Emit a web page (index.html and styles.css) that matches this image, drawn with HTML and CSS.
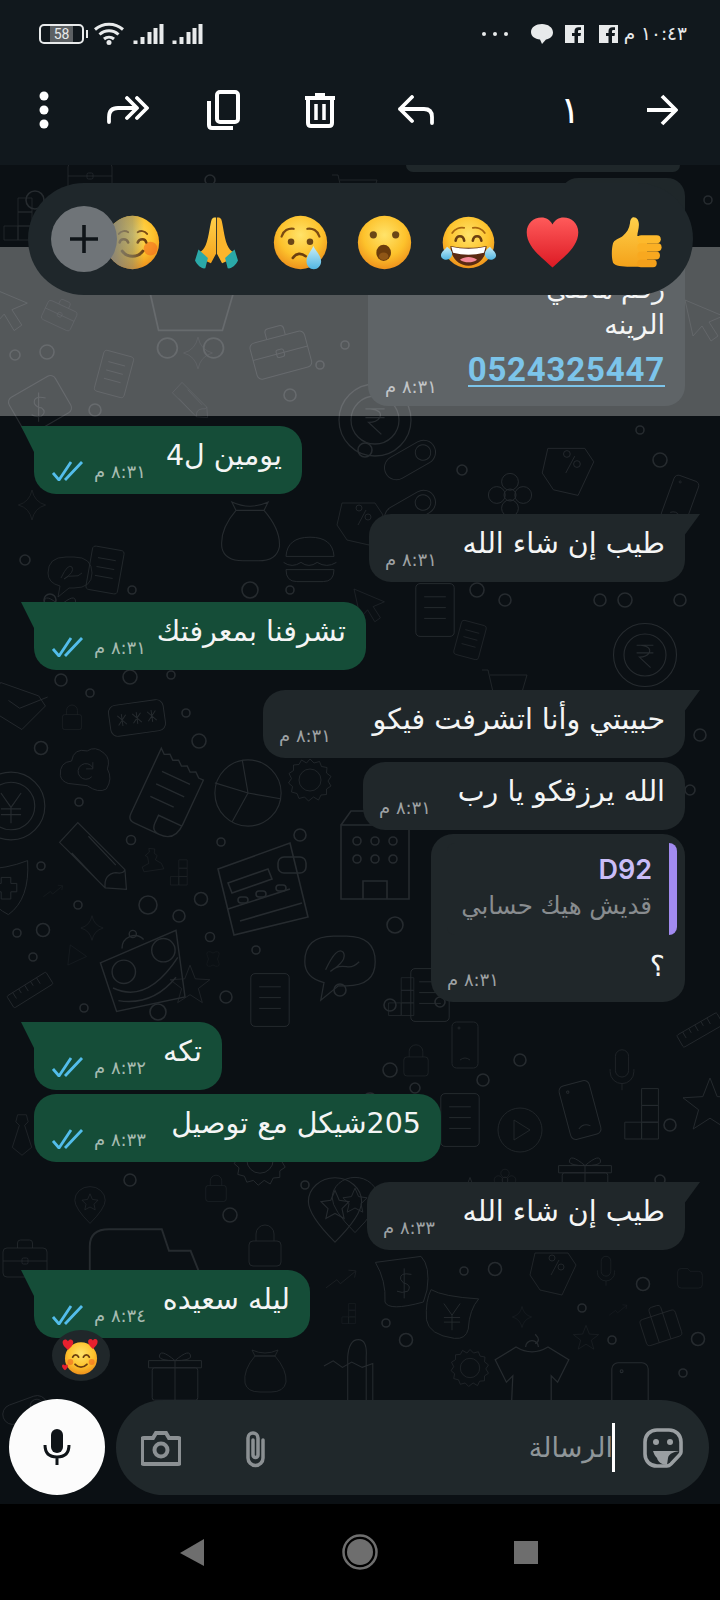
FILE: index.html
```html
<!DOCTYPE html>
<html lang="ar">
<head>
<meta charset="utf-8">
<title>WhatsApp</title>
<link rel="stylesheet" href="styles.css">
</head>
<body>
<svg class="defs" width="0" height="0" aria-hidden="true">
  <defs>
    <radialGradient id="face" cx="50%" cy="36%" r="64%"><stop offset="0" stop-color="#ffe36a"/><stop offset=".62" stop-color="#fdc22c"/><stop offset="1" stop-color="#ee921c"/></radialGradient>
    <linearGradient id="heartG" x1="0" y1="0" x2="0" y2="1"><stop offset="0" stop-color="#ff5a5a"/><stop offset="1" stop-color="#dc1a24"/></linearGradient>
    <linearGradient id="handG" x1="0" y1="0" x2="0" y2="1"><stop offset="0" stop-color="#ffd04a"/><stop offset="1" stop-color="#f4a21a"/></linearGradient>
    <linearGradient id="fade" x1="0" y1="0" x2="1" y2="0"><stop offset="0" stop-color="#7d8083"/><stop offset=".5" stop-color="#8a8a70" stop-opacity=".55"/><stop offset=".72" stop-color="#8a8a70" stop-opacity="0"/></linearGradient>
    <linearGradient id="tearG" x1="0" y1="0" x2="0" y2="1"><stop offset="0" stop-color="#c9eef8"/><stop offset="1" stop-color="#52b6e2"/></linearGradient>

    <symbol id="e-thumb" viewBox="-2 -1 68 68">
      <path d="M27 2c5-1 8 3 8 9 0 5-2 10-2 14h12v38H24C15 63 5 62 3 58c-2-6-2-17 0-24 1-4 8-6 12-9 5-4 8-9 9-16 0-3 1-6 3-7z" fill="url(#handG)"/>
      <rect x="33" y="24" width="29" height="10" rx="5" fill="#fdb92c"/>
      <rect x="33" y="34" width="30" height="10" rx="5" fill="#fbb024"/>
      <rect x="33" y="44" width="28" height="10" rx="5" fill="#f8a81f"/>
      <rect x="33" y="54" width="24" height="9.500" rx="4.500" fill="#f4a01a"/>
    </symbol>
    <symbol id="e-heart" viewBox="0 0 64 64">
      <path d="M32 61C19 49 2 37 2 20 2 10 10 3 19 3c6 0 10 3 13 8 3-5 7-8 13-8 9 0 17 7 17 17 0 17-17 29-30 41z" fill="url(#heartG)"/>
    </symbol>
    <symbol id="e-joy" viewBox="0 0 64 64">
      <circle cx="32" cy="32" r="30" fill="url(#face)"/>
      <path d="M13 21c3-5 9-7 14-6M51 21c-3-5-9-7-14-6" stroke="#a8660f" stroke-width="2" fill="none" stroke-linecap="round"/>
      <path d="M17 30c1-7 9-7 10 0M37 30c1-7 9-7 10 0" stroke="#6b3f10" stroke-width="3" fill="none" stroke-linecap="round"/>
      <path d="M11 36c13 3 29 3 42 0 0 13-9 23-21 23S11 49 11 36z" fill="#5a2a12"/>
      <path d="M12 37c13 3 27 3 40 0l-2 7c-12 3-24 3-36 0z" fill="#fff"/>
      <path d="M22 52c6-4 14-4 20 0-6 4-14 4-20 0z" fill="#f58a9a"/>
      <path d="M7 37c-2 3-7 6-7 10 0 3 3 5 6 5 4 0 7-3 7-7 0-3-3-6-6-8zM57 37c2 3 7 6 7 10 0 3-3 5-6 5-4 0-7-3-7-7 0-3 3-6 6-8z" fill="url(#tearG)"/>
    </symbol>
    <symbol id="e-wow" viewBox="0 0 64 64">
      <circle cx="32" cy="32" r="31" fill="url(#face)"/>
      <circle cx="19" cy="23" r="4.200" fill="#6b4616"/><circle cx="45" cy="23" r="4.200" fill="#6b4616"/>
      <ellipse cx="31" cy="44" rx="8.500" ry="9.500" fill="#6b3c0c"/>
      <ellipse cx="31" cy="48" rx="5.500" ry="4.500" fill="#8f5616"/>
    </symbol>
    <symbol id="e-sad" viewBox="0 0 64 64">
      <circle cx="32" cy="32" r="31" fill="url(#face)"/>
      <path d="M10 25c2-7 8-10 14-9M54 25c-2-7-8-10-14-9" stroke="#7a4a12" stroke-width="2.600" fill="none" stroke-linecap="round"/>
      <circle cx="21" cy="31" r="3.800" fill="#6b4616"/><circle cx="43" cy="31" r="3.800" fill="#6b4616"/>
      <path d="M23 50c4-6 10-6 15-2" stroke="#6b3f10" stroke-width="3" fill="none" stroke-linecap="round"/>
      <path d="M47 36c-2 5-8 11-8 18 0 5 4 9 8.500 9s8.500-4 8.500-9c0-7-7-13-9-18z" fill="url(#tearG)"/>
    </symbol>
    <symbol id="e-pray" viewBox="0 0 64 64">
      <path d="M30 3h1.500v42l-6 11-9-4-4-9c3-1 5-4 7-8 4-10 5-25 7-30 .8-1.500 2-2 3.500-2z" fill="url(#handG)"/>
      <path d="M34 3h-1.500v42l6 11 9-4 4-9c-3-1-5-4-7-8-4-10-5-25-7-30-.8-1.500-2-2-3.500-2z" fill="#fbb52c"/>
      <path d="M11 40l11 10-3 12c-4 1-9-3-12-9zM53 40 42 50l3 12c4 1 9-3 12-9z" fill="#2aa9a8"/>
    </symbol>
    <symbol id="e-smile" viewBox="0 0 64 64">
      <circle cx="32" cy="32" r="31" fill="url(#face)"/>
      <circle cx="53" cy="39" r="8" fill="#f0651f" opacity=".55"/>
      <path d="M16 22c3-4 8-4 11-2M38 20c3-2 8-2 11 2" stroke="#7a4a12" stroke-width="2.200" fill="none" stroke-linecap="round"/>
      <path d="M17 32c1-5 8-5 10 0M38 32c2-5 9-5 10 0" stroke="#6b3f10" stroke-width="3" fill="none" stroke-linecap="round"/>
      <path d="M20 42c6 8 18 8 24 0" stroke="#6b3f10" stroke-width="3.500" fill="none" stroke-linecap="round"/>
      <circle cx="32" cy="32" r="31" fill="url(#fade)"/>
    </symbol>
    <symbol id="e-love" viewBox="0 0 64 64">
      <circle cx="32" cy="36" r="27" fill="url(#face)"/>
      <path d="M18 34c2-5 8-5 10 0M36 34c2-5 8-5 10 0" stroke="#6b3f10" stroke-width="3" fill="none" stroke-linecap="round"/>
      <path d="M22 46c6 6 14 6 20 0" stroke="#6b3f10" stroke-width="3" fill="none" stroke-linecap="round"/>
      <circle cx="14" cy="42" r="5" fill="#f0651f" opacity=".6"/><circle cx="50" cy="42" r="5" fill="#f0651f" opacity=".6"/>
      <path d="M10 22C4 17 1 13 1 9c0-5 6-7 9-2 3-5 9-3 9 2 0 4-3 8-9 13z" fill="#e7202e"/>
      <path d="M52 20c-5-4-8-8-8-12 0-5 5-6 8-2 3-4 8-3 8 2 0 4-3 8-8 12z" fill="#e7202e"/>
      <path d="M5 56c-3-2-5-5-5-7 0-3 3-4 5-1 2-3 5-2 5 1 0 2-2 5-5 7z" fill="#e7202e"/>
    </symbol>

    <symbol id="d-case" viewBox="-50 -50 100 100" overflow="visible"><rect x="-44" y="-24" width="88" height="58" rx="8"/><path d="M-15-24v-10q0-6 6-6h18q6 0 6 6v10M-44 2H44"/><rect x="-6" y="-4" width="12" height="12" rx="3"/></symbol>
    <symbol id="d-suit" viewBox="-50 -50 100 100" overflow="visible"><rect x="-42" y="-22" width="84" height="62" rx="8"/><path d="M-14-22v-12q0-8 8-8h12q8 0 8 8v12M-14-22V40M14-22V40"/></symbol>
    <symbol id="d-star4" viewBox="-50 -50 100 100" overflow="visible"><path d="M0-44Q7-9 40 0 7 9 0 44-7 9-40 0-7-9 0-44z"/></symbol>
    <symbol id="d-star5" viewBox="-50 -50 100 100" overflow="visible"><path d="M0-45 12-14 45-12 19 8 28 40 0 22-28 40-19 8-45-12-12-14z"/></symbol>
    <symbol id="d-doc" viewBox="-50 -50 100 100" overflow="visible"><rect x="-32" y="-44" width="64" height="88" rx="7"/><path d="M-18-22H18M-18-4H18M-18 14H18"/></symbol>
    <symbol id="d-receipt" viewBox="-50 -50 100 100" overflow="visible"><path d="M-30-46l6 5 6-3 6 5 6-3 6 5 6-3 6 5 6-3 6 5 6 0V24Q30 46 10 46H-22Q-30 46-30 38zM10 46Q0 46 0 36V26H30"/><path d="M-18-22H18M-18-6H18M-18 10H12"/></symbol>
    <symbol id="d-gear" viewBox="-50 -50 100 100" overflow="visible"><circle r="22"/><path d="M0-42 8-34 19-37 23-27 34-25 33-14 42-7 36 2 42 12 33 18 33 29 22 30 17 40 7 34-3 42-11 34-22 37-26 27-37 24-35 13-43 6-37-3-42-13-33-19-33-30-22-31-17-40-7-34z"/></symbol>
    <symbol id="d-coin" viewBox="-50 -50 100 100" overflow="visible"><circle r="45"/><circle r="30"/><path d="M-12-14H12M-12-3H12M-6-14Q10-12 6-3 2 3-8 3L8 18"/></symbol>
    <symbol id="d-yen" viewBox="-50 -50 100 100" overflow="visible"><circle r="47"/><circle r="33"/><path d="M-14-18 0 2 14-18M-14 4H14M-14 12H14M0 2V24"/></symbol>
    <symbol id="d-lock" viewBox="-50 -50 100 100" overflow="visible"><rect x="-32" y="-8" width="64" height="50" rx="8"/><path d="M-18-8v-14a18 18 0 0 1 36 0v14"/></symbol>
    <symbol id="d-phone" viewBox="-50 -50 100 100" overflow="visible"><rect x="-26" y="-46" width="52" height="92" rx="9"/><path d="M-10 30q10-8 20 0"/><circle cx="-12" cy="-34" r="2"/></symbol>
    <symbol id="d-mic" viewBox="-50 -50 100 100" overflow="visible"><rect x="-15" y="-46" width="30" height="62" rx="15"/><path d="M-27-2v6a27 27 0 0 0 54 0v-6M0 31v15"/></symbol>
    <symbol id="d-play" viewBox="-50 -50 100 100" overflow="visible"><circle r="44"/><path d="M-12-20 20 0-12 20z"/></symbol>
    <symbol id="d-moneybag" viewBox="-50 -50 100 100" overflow="visible"><path d="M-46-36 30-46Q46-30 40 10L34 30Q-24 46-30 30-28-6-46-36z"/><path d="M14-16Q-6-20-4-8 0 0 6 0 14 4 8 12-2 16-10 12M2-26V24"/></symbol>
    <symbol id="d-yenbag" viewBox="-50 -50 100 100" overflow="visible"><path d="M-36-42Q-16-30 46-26 30-8 28 26 24 44 4 42-40 36-44 10-46-24-36-42z"/><path d="M-14-18 0 2 14-18M-14 6H14M-14 14H14M0 2V28"/></symbol>
    <symbol id="d-bag" viewBox="-50 -50 100 100" overflow="visible"><path d="M-20-28Q-44 0-40 26-36 44-10 44H12Q38 44 42 24 44 0 20-28zM-26-40Q0-28 26-40L20-28H-20z"/></symbol>
    <symbol id="d-blocks" viewBox="-50 -50 100 100" overflow="visible"><path d="M-14-44H14V-16H-14zM-14-16H14V12H-14zM-14 12H14V40H-14zM-42 12H-14V40H-42z"/></symbol>
    <symbol id="d-toggle" viewBox="-50 -50 100 100" overflow="visible"><rect x="-46" y="-20" width="92" height="40" rx="20"/><circle cx="25" r="13"/></symbol>
    <symbol id="d-pass" viewBox="-50 -50 100 100" overflow="visible"><rect x="-46" y="-26" width="92" height="52" rx="12"/><path d="M-32-8-18 8M-18-8-32 8M-25-10V10M-7-8 7 8M7-8-7 8M0-10V10M18-8 32 8M32-8 18 8M25-10V10"/></symbol>
    <symbol id="d-calc" viewBox="-50 -50 100 100" overflow="visible"><path d="M-44-18 28-44 46 30-28 48zM-34-4 6-18 10-8-30 6zM-34 22l62-20M-22 34 40 16"/><rect x="-24" y="10" width="10" height="6" rx="3"/><rect x="-6" y="4" width="10" height="6" rx="3"/><rect x="14" y="-2" width="10" height="6" rx="3"/><rect x="16" y="-30" width="28" height="16" rx="6"/></symbol>
    <symbol id="d-pie" viewBox="-50 -50 100 100" overflow="visible"><circle r="46"/><path d="M0 0-8-46M0 0-46-14M0 0 45 8M0 0-22 40"/></symbol>
    <symbol id="d-shop" viewBox="-50 -50 100 100" overflow="visible"><path d="M-34 44V-30H34V44zM-34-30-24-44H24L34-30M-12 44V26H12V44"/><circle cx="-18" cy="-14" r="4"/><circle cx="0" cy="-14" r="4"/><circle cx="18" cy="-14" r="4"/><circle cx="-18" cy="4" r="4"/><circle cx="0" cy="4" r="4"/><circle cx="18" cy="4" r="4"/></symbol>
    <symbol id="d-cart" viewBox="-50 -50 100 100" overflow="visible"><path d="M-46-30H-34L-24 14H34L44-20H-30"/><circle cx="-16" cy="30" r="9"/><circle cx="26" cy="30" r="9"/></symbol>
    <symbol id="d-burger" viewBox="-50 -50 100 100" overflow="visible"><path d="M-40-6Q-38-38 0-38 38-38 40-6zM-44 4Q-30 14-15 4-2 14 12 4 28 14 44 4M-40 16H40Q40 36 22 36H-22Q-40 36-40 16z"/></symbol>
    <symbol id="d-chat" viewBox="-50 -50 100 100" overflow="visible"><path d="M-44-4Q-44-36-8-36H8Q44-36 44-4 44 26 8 26H-2L-24 44-20 22Q-44 16-44-4z"/><path d="M-18 6Q-4-24 4-16 10-6-12 8-4 0 8 2 16 4 24-4"/></symbol>
    <symbol id="d-cloud" viewBox="-50 -50 100 100" overflow="visible"><path d="M-44 10Q-46-14-24-16-20-40 4-34 18-44 34-30 46-20 40-2 50 16 38 34 24 42 4 28L-30 24Q-42 20-44 10z"/><path d="M14-4A14 14 0 1 0 12 12M14-14V-2H2"/></symbol>
    <symbol id="d-mail" viewBox="-50 -50 100 100" overflow="visible"><path d="M-40-42 28-18 40 0-2 42-44 16-46-30zM-26-10-6 4 44-16"/></symbol>
    <symbol id="d-shield" viewBox="-50 -50 100 100" overflow="visible"><path d="M-36-30Q0-30 36-44 40 20 4 46-40 24-36-30z"/><path d="M-8-16H8V-6H18V8H8V20H-8V8H-18V-6H-8z"/></symbol>
    <symbol id="d-trend" viewBox="-50 -50 100 100" overflow="visible"><path d="M-44 26-12 2-2 14 42-22M22-26 44-24 40-4"/></symbol>
    <symbol id="d-chess" viewBox="-50 -50 100 100" overflow="visible"><path d="M-30 36-36 20-14 8-18-14-26-18-12-30-14-42 6-40 4-26 14-18 8-4 28 8 36 26z"/></symbol>
    <symbol id="d-tri" viewBox="-50 -50 100 100" overflow="visible"><path d="M-24-42 44 6-34 42z"/></symbol>
    <symbol id="d-robot" viewBox="-50 -50 100 100" overflow="visible"><path d="M-44-8 40-44 50 30-26 46z"/><circle cx="-18" cy="2" r="13"/><circle cx="26" cy="-22" r="13"/><path d="M-30 20Q8 38 42-14M-24 34Q14 40 40 8"/><circle cx="-8" cy="-40" r="4"/><path d="M-20-24a14 14 0 0 1 24-10"/></symbol>
    <symbol id="d-cross" viewBox="-50 -50 100 100" overflow="visible"><path d="M-14-40Q0-26 14-40 44-44 30-14 20 0 30 14 44 44 14 40 0 26-14 40-44 44-30 14-20 0-30-14-44-44-14-40z"/></symbol>
    <symbol id="d-ruler" viewBox="-50 -50 100 100" overflow="visible"><rect x="-46" y="-14" width="92" height="28" rx="3"/><path d="M-32-14V0M-18-14V-4M-4-14V0M10-14V-4M24-14V0"/></symbol>
    <symbol id="d-tag" viewBox="-50 -50 100 100" overflow="visible"><path d="M-36-44H30L46-20 18 40-26 30-46 0z"/><path d="M12-30-4 0"/><circle cx="-2" cy="-34" r="6"/><circle cx="16" cy="-16" r="6"/></symbol>
    <symbol id="d-folder" viewBox="-50 -50 100 100" overflow="visible"><path d="M-44-22Q-44-34-30-34H-8L0-24H30Q44-24 44-10V24Q44 36 30 36H-30Q-44 36-44 24z"/></symbol>
    <symbol id="d-tshirt" viewBox="-50 -50 100 100" overflow="visible"><path d="M-20-30-46-14-32 14-24 6-26 50H24L24 6 32 14 46-14 20-30Q0-18-20-30zM-8-30A8 8 0 0 1 8-30M4-46Q12-38 4-34"/></symbol>
    <symbol id="d-bread" viewBox="-50 -50 100 100" overflow="visible"><path d="M-8 46V-20Q-6-46 8-46 22-46 20-20V46M-44-6-30-14-16-4-2-12 14-4 30-10V46"/></symbol>
    <symbol id="d-van" viewBox="-50 -50 100 100" overflow="visible"><path d="M-46 22V-20Q-46-34-30-34H14L20-16H38L46 4V22H30M-10 22H12M-46 22H-30"/><circle cx="-20" cy="24" r="10"/><circle cx="22" cy="24" r="10"/></symbol>
    <symbol id="d-gift" viewBox="-50 -50 100 100" overflow="visible"><rect x="-38" y="-12" width="76" height="54" rx="4"/><path d="M-44-24H44V-12H-44zM0-24V42M0-24Q-26-46-26-30-24-24 0-24 26-46 26-30 24-24 0-24"/></symbol>
    <symbol id="d-cash" viewBox="-50 -50 100 100" overflow="visible"><rect x="-38" y="-30" width="76" height="60" rx="8" transform="rotate(-30)"/><path d="M8-10Q-10-14-8-2-4 4 2 4 10 10 2 16-6 18-12 14M-2-18V24"/></symbol>
    <symbol id="d-flower" viewBox="-50 -50 100 100" overflow="visible"><circle r="10"/><circle cy="-22" r="14"/><circle cy="22" r="14"/><circle cx="-22" r="14"/><circle cx="22" r="14"/></symbol>
    <symbol id="d-tie" viewBox="-50 -50 100 100" overflow="visible"><path d="M-10-46H10L14-30 6-22 22 28 0 46-22 28-6-22-14-30z"/></symbol>
    <symbol id="d-pin" viewBox="-50 -50 100 100" overflow="visible"><path d="M0 46Q-38 8-38-12A38 34 0 0 1 38-12Q38 8 0 46z"/><path d="M0-28 6-14 20-12 10-2 13 12 0 5-13 12-10-2-20-12-6-14z"/></symbol>
    <symbol id="d-cursor" viewBox="-50 -50 100 100" overflow="visible"><path d="M-40-40 36-8 8 4 26 32 12 42-6 12-24 32z"/></symbol>
    <symbol id="d-pencil" viewBox="-50 -50 100 100" overflow="visible"><path d="M-44-18-20-44 42 18 44 44 16 42zM-28-4 8 34M-6-26 30 12M16 42Q14 24 30 22 40 24 42 18"/></symbol>
  </defs>
</svg>

<main class="screen">
  <header class="topbar">
    <div class="status">
      <div class="status-left">
        <div class="battery"><span class="battery-num">58</span></div>
        <svg class="ic-wifi" viewBox="0 0 30 24"><path d="M1 7.500C9 .5 21 .5 29 7.500M5.500 12.500C11 7.500 19 7.500 24.500 12.500M10 17C13 14.500 17 14.500 20 17" fill="none" stroke="#e8eaeb" stroke-width="3"/><circle cx="15" cy="20.500" r="2.500" fill="#e8eaeb"/></svg>
        <svg class="ic-signal" viewBox="0 0 30 20"><path d="M0 16.500h4V20H0zM7 13h4v7H7zM14 8h4v12h-4zM20 4h4v16h-4zM26 0h4v20h-4z" fill="#e8eaeb"/></svg>
        <svg class="ic-signal" viewBox="0 0 30 20"><path d="M0 16.500h4V20H0zM7 13h4v7H7zM14 8h4v12h-4zM20 4h4v16h-4zM26 0h4v20h-4z" fill="#e8eaeb"/></svg>
      </div>
      <div class="status-right">
        <svg class="ic-dots" viewBox="0 0 26 4"><circle cx="2" cy="2" r="2" fill="#e8eaeb"/><circle cx="13" cy="2" r="2" fill="#e8eaeb"/><circle cx="24" cy="2" r="2" fill="#e8eaeb"/></svg>
        <svg class="ic-msg" viewBox="0 0 22 20"><path d="M11 0c6 0 11 3.500 11 8.500 0 4.500-4 6.500-7 7L11 20l-2-4.500C4 15 0 12.500 0 8c0-5 5-8 11-8z" fill="#e8eaeb"/></svg>
        <svg class="ic-fb" viewBox="0 0 19 18"><path fill="#e8eaeb" fill-rule="evenodd" d="M0 0h19v18H0zM13 18v-7h2.500l.5-3h-3V6.500c0-1 .3-1.500 1.500-1.500H16V2.300h-2.500C11 2.300 9.500 3.800 9.500 6.300V8H7v3h2.500v7z"/></svg>
        <svg class="ic-fb" viewBox="0 0 19 18"><path fill="#e8eaeb" fill-rule="evenodd" d="M0 0h19v18H0zM13 18v-7h2.500l.5-3h-3V6.500c0-1 .3-1.500 1.500-1.500H16V2.300h-2.500C11 2.300 9.500 3.800 9.500 6.300V8H7v3h2.500v7z"/></svg>
        <span class="clock">١٠:٤٣ م</span>
      </div>
    </div>
    <div class="actions">
      <svg class="a-more" viewBox="0 0 10 38"><circle cx="5" cy="5" r="4.500" fill="#fff"/><circle cx="5" cy="19" r="4.500" fill="#fff"/><circle cx="5" cy="33" r="4.500" fill="#fff"/></svg>
      <svg class="a-forward" viewBox="0 0 42 28"><path d="M2 26v-5q0-9 9-9h15M20 2l10 10-10 10M30 2l10 10-10 10" fill="none" stroke="#fff" stroke-width="3.800" stroke-linecap="round" stroke-linejoin="round"/></svg>
      <svg class="a-copy" viewBox="0 0 34 40"><rect x="11" y="2" width="21" height="30" rx="3" fill="none" stroke="#fff" stroke-width="4"/><path d="M3 11v24q0 3 3 3h21" fill="none" stroke="#fff" stroke-width="4"/></svg>
      <svg class="a-delete" viewBox="0 0 32 36"><path d="M1 6h30" stroke="#fff" stroke-width="4"/><path d="M11 3h10" stroke="#fff" stroke-width="4"/><path d="M4 7v24q0 3 3 3h18q3 0 3-3V7" fill="none" stroke="#fff" stroke-width="4"/><path d="M12 12v16M20 12v16" stroke="#fff" stroke-width="3.500"/></svg>
      <svg class="a-reply" viewBox="0 0 36 30"><path d="M14 2 2 14l12 12M2 14h24q8 0 8 8v6" fill="none" stroke="#fff" stroke-width="3.800" stroke-linecap="round" stroke-linejoin="round"/></svg>
      <span class="count">١</span>
      <svg class="a-back" viewBox="0 0 32 32"><path d="M1 16h29M16 2l14 14-14 14" fill="none" stroke="#fff" stroke-width="3.800" stroke-linejoin="round"/></svg>
    </div>
  </header>

  <section class="chat">
    <svg class="wall" viewBox="0 165 720 1339" aria-hidden="true">
      <g class="doodles">
        <use href="#d-blocks" x="0" y="195" width="50" height="50"/>
        <use href="#d-case" x="60" y="150" width="60" height="50"/>
        <use href="#d-cart" x="330" y="165" width="50" height="50"/>
        <use href="#d-cursor" x="-20" y="280" width="55" height="55"/>
        <use href="#d-case" x="40" y="296" width="40" height="36" transform="rotate(25 60 314)"/>
        <use href="#d-cart" x="110" y="260" width="150" height="110"/>
        <use href="#d-case" x="240" y="320" width="80" height="64" transform="rotate(-15 280 352)"/>
        <use href="#d-doc" x="90" y="350" width="48" height="48" transform="rotate(15 114 374)"/>
        <use href="#d-star4" x="180" y="335" width="36" height="36"/>
        <use href="#d-cash" x="5" y="370" width="70" height="70"/>
        <use href="#d-pencil" x="170" y="380" width="40" height="40"/>
        <use href="#d-coin" x="335" y="380" width="80" height="80"/>
        <use href="#d-cursor" x="680" y="290" width="50" height="60"/>
        <use href="#d-star4" x="15" y="488" width="34" height="34"/>
        <use href="#d-smile" x="62" y="505" width="50" height="60"/>
        <use href="#d-chat" x="40" y="550" width="60" height="50"/>
        <use href="#d-doc" x="80" y="545" width="50" height="50" transform="rotate(10 105 570)"/>
        <use href="#d-gift" x="20" y="590" width="80" height="60"/>
        <use href="#d-burger" x="275" y="530" width="70" height="60"/>
        <use href="#d-bag" x="215" y="490" width="70" height="80"/>
        <use href="#d-toggle" x="375" y="430" width="70" height="60" transform="rotate(-30 410 460)"/>
        <use href="#d-toggle" x="375" y="480" width="70" height="60" transform="rotate(-30 410 510)"/>
        <use href="#d-flower" x="480" y="465" width="60" height="60"/>
        <use href="#d-tag" x="540" y="445" width="56" height="56"/>
        <use href="#d-phone" x="655" y="470" width="50" height="60" transform="rotate(20 680 500)"/>
        <use href="#d-tag" x="335" y="500" width="50" height="50"/>
        <use href="#d-cursor" x="350" y="580" width="40" height="50"/>
        <use href="#d-doc" x="450" y="615" width="40" height="50" transform="rotate(15 470 640)"/>
        <use href="#d-doc" x="400" y="580" width="70" height="60"/>
        <use href="#d-coin" x="610" y="620" width="70" height="70"/>
        <use href="#d-cart" x="470" y="660" width="70" height="50"/>

        <use href="#d-mail" x="-5" y="678" width="56" height="56"/>
        <use href="#d-lock" x="57" y="702" width="30" height="30"/>
        <use href="#d-pass" x="100" y="688" width="74" height="60" transform="rotate(-8 137 718)"/>
        <use href="#d-cloud" x="55" y="742" width="60" height="56"/>
        <use href="#d-receipt" x="125" y="740" width="86" height="110" transform="rotate(25 168 795)"/>
        <use href="#d-pie" x="212" y="757" width="72" height="72"/>
        <use href="#d-yen" x="-35" y="770" width="92" height="72"/>
        <use href="#d-pencil" x="55" y="818" width="76" height="76"/>
        <use href="#d-shield" x="-24" y="855" width="60" height="64"/>
        <use href="#d-trend" x="38" y="880" width="30" height="22"/>
        <use href="#d-chess" x="138" y="845" width="30" height="32"/>
        <use href="#d-blocks" x="168" y="855" width="30" height="36"/>
        <use href="#d-calc" x="212" y="832" width="100" height="110"/>
        <use href="#d-star4" x="78" y="912" width="28" height="32"/>
        <use href="#d-tri" x="64" y="942" width="24" height="26"/>
        <use href="#d-robot" x="90" y="925" width="100" height="90"/>
        <use href="#d-star5" x="168" y="960" width="44" height="50"/>
        <use href="#d-cross" x="204" y="950" width="18" height="18"/>
        <use href="#d-ruler" x="-15" y="965" width="90" height="50" transform="rotate(-32 30 990)"/>
        <use href="#d-gear" x="285" y="755" width="50" height="50"/>
        <use href="#d-shop" x="325" y="805" width="100" height="100"/>
        <use href="#d-chat" x="295" y="925" width="90" height="80"/>
        <use href="#d-doc" x="240" y="965" width="60" height="70"/>
        <use href="#d-blocks" x="385" y="975" width="45" height="45"/>
        <use href="#d-doc" x="400" y="960" width="60" height="70"/>
        <use href="#d-lock" x="397" y="1040" width="38" height="40"/>
        <use href="#d-ruler" x="660" y="1005" width="80" height="50" transform="rotate(-30 700 1030)"/>
        <use href="#d-smile" x="300" y="1050" width="80" height="80"/>
        <use href="#d-phone" x="440" y="1010" width="50" height="70"/>
        <use href="#d-phone" x="550" y="1065" width="60" height="90" transform="rotate(-15 580 1110)"/>
        <use href="#d-mic" x="600" y="1035" width="44" height="70"/>
        <use href="#d-play" x="495" y="1100" width="50" height="60"/>
        <use href="#d-blocks" x="620" y="1075" width="60" height="80"/>
        <use href="#d-star5" x="680" y="1075" width="60" height="60"/>
        <use href="#d-tie" x="0" y="1100" width="44" height="70"/>
        <use href="#d-doc" x="430" y="1085" width="60" height="70"/>
        <use href="#d-flower" x="490" y="1165" width="30" height="30"/>
        <use href="#d-gift" x="550" y="1150" width="70" height="60"/>
        <use href="#d-star5" x="445" y="1170" width="50" height="60"/>
        <use href="#d-pin" x="300" y="1170" width="70" height="80"/>
        <use href="#d-pin" x="325" y="1160" width="60" height="90"/>
        <use href="#d-lock" x="200" y="1170" width="32" height="36"/>
        <use href="#d-gear" x="230" y="1130" width="60" height="60"/>
        <use href="#d-pin" x="70" y="1180" width="40" height="50"/>
        <use href="#d-van" x="70" y="1210" width="150" height="120"/>
        <use href="#d-lock" x="240" y="1220" width="50" height="50"/>
        <use href="#d-case" x="0" y="1230" width="50" height="60"/>

        <use href="#d-trend" x="322" y="1262" width="38" height="34"/>
        <use href="#d-moneybag" x="362" y="1254" width="82" height="60"/>
        <use href="#d-yenbag" x="412" y="1285" width="80" height="58"/>
        <use href="#d-tag" x="520" y="1250" width="66" height="50"/>
        <use href="#d-mic" x="590" y="1250" width="32" height="42"/>
        <use href="#d-folder" x="676" y="1264" width="28" height="28"/>
        <use href="#d-blocks" x="340" y="1302" width="24" height="24"/>
        <use href="#d-star4" x="510" y="1305" width="24" height="24"/>
        <use href="#d-trend" x="605" y="1300" width="26" height="20"/>
        <use href="#d-star5" x="572" y="1324" width="28" height="28"/>
        <use href="#d-suit" x="636" y="1302" width="48" height="44" transform="rotate(-18 660 1325)"/>
        <use href="#d-tshirt" x="492" y="1326" width="80" height="90"/>
        <use href="#d-gear" x="448" y="1346" width="44" height="44"/>
        <use href="#d-bread" x="320" y="1330" width="66" height="80"/>
        <use href="#d-phone" x="595" y="1360" width="70" height="70"/>
        <use href="#d-gift" x="140" y="1345" width="70" height="60"/>
        <use href="#d-bag" x="240" y="1340" width="50" height="60"/>
        <use href="#d-toggle" x="0" y="1385" width="50" height="50" transform="rotate(-20 25 1410)"/>

        <circle cx="35" cy="200" r="9"/><circle cx="130" cy="190" r="5"/><circle cx="210" cy="180" r="5"/><circle cx="708" cy="200" r="4"/><circle cx="15" cy="355" r="5"/><circle cx="47" cy="352" r="7"/><circle cx="95" cy="410" r="6"/><circle cx="290" cy="395" r="6"/><circle cx="320" cy="365" r="4"/><circle cx="345" cy="345" r="4"/>
        <circle cx="365" cy="450" r="7"/><circle cx="462" cy="470" r="5"/><circle cx="660" cy="460" r="7"/><circle cx="640" cy="430" r="4"/><circle cx="50" cy="600" r="6"/><circle cx="25" cy="560" r="5"/><circle cx="132" cy="590" r="4"/><circle cx="250" cy="590" r="8"/><circle cx="290" cy="590" r="4"/><circle cx="477" cy="590" r="7"/><circle cx="505" cy="600" r="6"/><circle cx="600" cy="600" r="6"/><circle cx="625" cy="600" r="7"/><circle cx="680" cy="600" r="6"/>
        <circle cx="61" cy="680" r="6"/><circle cx="90" cy="693" r="4"/><circle cx="130" cy="677" r="7"/><circle cx="171" cy="675" r="4"/><circle cx="186" cy="713" r="4"/><circle cx="199" cy="741" r="7"/><circle cx="41" cy="748" r="6.500"/><circle cx="79" cy="802" r="4"/><circle cx="131" cy="840" r="4.500"/><circle cx="221" cy="842" r="4"/><circle cx="41" cy="866" r="4"/><circle cx="78" cy="905" r="4"/><circle cx="148" cy="905" r="9"/><circle cx="201" cy="899" r="6.500"/><circle cx="179" cy="916" r="6"/><circle cx="17" cy="933" r="4"/><circle cx="43" cy="930" r="6.500"/><circle cx="33" cy="957" r="4"/><circle cx="210" cy="937" r="4.500"/><circle cx="256" cy="950" r="4"/><circle cx="226" cy="997" r="6"/><circle cx="84" cy="1008" r="4"/><circle cx="158" cy="1012" r="8"/>
        <circle cx="300" cy="835" r="6"/><circle cx="690" cy="790" r="5"/><circle cx="700" cy="735" r="6"/><circle cx="340" cy="990" r="6"/><circle cx="390" cy="1005" r="6"/><circle cx="395" cy="925" r="8"/><circle cx="440" cy="1002" r="5"/>
        <circle cx="370" cy="1100" r="7"/><circle cx="390" cy="1070" r="7"/><circle cx="415" cy="1088" r="5"/><circle cx="483" cy="1080" r="6"/><circle cx="520" cy="1060" r="6"/><circle cx="670" cy="1125" r="6"/><circle cx="660" cy="1180" r="5"/><circle cx="500" cy="1220" r="5"/><circle cx="130" cy="1180" r="6"/><circle cx="230" cy="1215" r="7"/><circle cx="305" cy="1185" r="4"/>
        <circle cx="464" cy="1271" r="4"/><circle cx="495" cy="1269" r="6.500"/><circle cx="643" cy="1284" r="6.500"/><circle cx="582" cy="1308" r="4"/><circle cx="386" cy="1323" r="4"/><circle cx="406" cy="1340" r="6.500"/><circle cx="612" cy="1340" r="4"/><circle cx="698" cy="1339" r="6.500"/><circle cx="683" cy="1373" r="4"/>
      </g>
    </svg>

    <div class="messages">
      <div class="ghost-a"></div>
      <div class="ghost-b"></div>
      <div class="selected">
        <div class="sel-bubble">
          <p class="sel-line">رقم هاتفي</p>
          <p class="sel-line">الرينه</p>
          <div class="sel-foot">
            <a class="phone">0524325447</a>
            <span class="time">٨:٣١ م</span>
          </div>
        </div>
      </div>

      <div class="bubble out gap-first w268 tail">
        <span class="txt">يومين ل4</span>
        <span class="meta"><span class="time">٨:٣١ م</span><svg class="ticks" viewBox="0 0 32 20"><path d="M1 12l6 7L19 1M13 19 30 1" fill="none" stroke="#53bdeb" stroke-width="2.800"/></svg></span>
      </div>
      <div class="bubble in gap-lg w316 tail">
        <span class="txt">طيب إن شاء الله</span>
        <span class="meta"><span class="time">٨:٣١ م</span></span>
      </div>
      <div class="bubble out gap-lg w332 tail">
        <span class="txt">تشرفنا بمعرفتك</span>
        <span class="meta"><span class="time">٨:٣١ م</span><svg class="ticks" viewBox="0 0 32 20"><path d="M1 12l6 7L19 1M13 19 30 1" fill="none" stroke="#53bdeb" stroke-width="2.800"/></svg></span>
      </div>
      <div class="bubble in gap-lg w422 tail">
        <span class="txt">حبيبتي وأنا اتشرفت فيكو</span>
        <span class="meta"><span class="time">٨:٣١ م</span></span>
      </div>
      <div class="bubble in gap-sm w322">
        <span class="txt">الله يرزقكو يا رب</span>
        <span class="meta"><span class="time">٨:٣١ م</span></span>
      </div>
      <div class="bubble in gap-sm w254 quoted">
        <div class="quote">
          <div class="quote-name">D92</div>
          <div class="quote-text">قديش هيك حسابي</div>
        </div>
        <div class="quoted-foot">
          <span class="txt q-mark">؟</span>
          <span class="meta"><span class="time">٨:٣١ م</span></span>
        </div>
      </div>
      <div class="bubble out gap-lg w188 tail">
        <span class="txt">تكه</span>
        <span class="meta"><span class="time">٨:٣٢ م</span><svg class="ticks" viewBox="0 0 32 20"><path d="M1 12l6 7L19 1M13 19 30 1" fill="none" stroke="#53bdeb" stroke-width="2.800"/></svg></span>
      </div>
      <div class="bubble out gap-sm w407">
        <span class="txt">205شيكل مع توصيل</span>
        <span class="meta"><span class="time">٨:٣٣ م</span><svg class="ticks" viewBox="0 0 32 20"><path d="M1 12l6 7L19 1M13 19 30 1" fill="none" stroke="#53bdeb" stroke-width="2.800"/></svg></span>
      </div>
      <div class="bubble in gap-lg w318 tail">
        <span class="txt">طيب إن شاء الله</span>
        <span class="meta"><span class="time">٨:٣٣ م</span></span>
      </div>
      <div class="bubble out gap-lg w276 tail">
        <span class="txt">ليله سعيده</span>
        <span class="meta"><span class="time">٨:٣٤ م</span><svg class="ticks" viewBox="0 0 32 20"><path d="M1 12l6 7L19 1M13 19 30 1" fill="none" stroke="#53bdeb" stroke-width="2.800"/></svg></span>
        <div class="reaction-pill"><svg class="pill-emoji"><use href="#e-love"/></svg></div>
      </div>
    </div>

    <div class="reactions">
      <div class="plus"><svg class="plus-ic" viewBox="0 0 32 32"><path d="M16 2v28M2 16h28" stroke="#0f1418" stroke-width="3.600"/></svg></div>
      <div class="emoji-row">
        <svg class="emoji"><use href="#e-smile"/></svg>
        <svg class="emoji"><use href="#e-pray"/></svg>
        <svg class="emoji"><use href="#e-sad"/></svg>
        <svg class="emoji"><use href="#e-wow"/></svg>
        <svg class="emoji"><use href="#e-joy"/></svg>
        <svg class="emoji"><use href="#e-heart"/></svg>
        <svg class="emoji"><use href="#e-thumb"/></svg>
      </div>
    </div>

    <div class="composer">
      <div class="mic"><svg class="mic-ic" viewBox="0 0 28 38"><rect x="8" y="1" width="12" height="24" rx="6" fill="#0f1418"/><path d="M2 17q0 12 12 12t12-12M14 29v8" fill="none" stroke="#0f1418" stroke-width="3"/></svg></div>
      <div class="input">
        <svg class="ic-camera" viewBox="0 0 40 36"><path d="M3 8h9l3-5h10l3 5h9q2 0 2 2v22q0 2-2 2H3q-2 0-2-2V10q0-2 2-2z" fill="none" stroke="#8b9093" stroke-width="4"/><circle cx="20" cy="20" r="6.500" fill="none" stroke="#8b9093" stroke-width="4"/></svg>
        <svg class="ic-clip" viewBox="0 0 26 40"><path d="M20 12v18a7.500 7.500 0 0 1-15 0V10a5 5 0 0 1 10 0v17a2 2 0 0 1-5 0V12" fill="none" stroke="#8b9093" stroke-width="3.500" stroke-linecap="round"/></svg>
        <span class="placeholder">الرسالة</span>
        <span class="cursor"></span>
        <svg class="ic-sticker" viewBox="0 0 40 40"><path d="M14 2h12c7 0 12 5 12 12v10c0 1-.5 2-1.500 3L28 36c-1 1-2 2-4 2H14C7 38 2 33 2 26V14C2 7 7 2 14 2z" fill="none" stroke="#9a9fa2" stroke-width="3.600"/><circle cx="13" cy="14" r="3" fill="#9a9fa2"/><circle cx="27" cy="14" r="3" fill="#9a9fa2"/><path d="M10 23h26c-4 1-10 2-11 7l-1 7c-5 0-9-3-10-7-2-2-3-4-4-7z" fill="#9a9fa2"/></svg>
      </div>
    </div>
  </section>

  <nav class="navbar">
    <svg class="nav-back" viewBox="0 0 24 27"><path d="M24 0v27L0 14z" fill="#6e6e6e"/></svg>
    <svg class="nav-home" viewBox="0 0 36 36"><circle cx="18" cy="18" r="16.500" fill="none" stroke="#6e6e6e" stroke-width="2.500"/><circle cx="18" cy="18" r="13" fill="#6e6e6e"/></svg>
    <span class="nav-square"></span>
  </nav>
</main>
</body>
</html>
```
FILE: styles.css
```css
* { box-sizing: border-box; }
html, body { margin: 0; padding: 0; background: #000; }
body { font-family: "DejaVu Sans", "Noto Sans", sans-serif; }
.defs { position: absolute; width: 0; height: 0; }

.screen { width: 720px; height: 1600px; display: flex; flex-direction: column; overflow: hidden; }

/* top bar */
.topbar { height: 165px; background: #11181d; flex: none; display: flex; flex-direction: column; }
.status { height: 68px; display: flex; justify-content: space-between; align-items: center; padding: 0 33px 0 39px; }
.status-left, .status-right { display: flex; align-items: center; }
.battery { width: 45px; height: 20px; border: 2.500px solid #e8eaeb; border-radius: 5px; display: flex; align-items: center; justify-content: center; position: relative; margin-right: 10px; }
.battery::after { content: ""; position: absolute; right: -6px; top: 4px; width: 2px; height: 8px; background: #e8eaeb; }
.battery-num { font-family: "Roboto", sans-serif; font-size: 14px; color: #e8eaeb; line-height: 1; background: #5c6063; padding: 1px 4px; }
.ic-wifi { width: 30px; height: 24px; margin-right: 9px; }
.ic-signal { width: 31px; height: 20px; margin-right: 8px; }
.ic-dots { width: 26px; height: 4px; margin-right: 23px; }
.ic-msg { width: 22px; height: 20px; margin-right: 12px; }
.ic-fb { width: 19px; height: 18px; margin-right: 15px; }
.ic-fb + .clock { margin-left: -9px; }
.clock { color: #e8eaeb; font-size: 18.500px; direction: rtl; unicode-bidi: isolate; line-height: 1; }

.actions { display: flex; align-items: center; height: 84px; padding-left: 39px; color: #fff; }
.a-more { width: 10px; height: 38px; }
.a-forward { width: 42px; height: 28px; margin-left: 58px; }
.a-copy { width: 34px; height: 40px; margin-left: 57px; }
.a-delete { width: 32px; height: 36px; margin-left: 64px; }
.a-reply { width: 36px; height: 30px; margin-left: 62px; }
.count { font-size: 38px; margin-left: 126px; width: 14px; line-height: 1; }
.a-back { width: 32px; height: 32px; margin-left: 72px; }

/* chat */
.chat { position: relative; flex: 1; background: #0b1014; display: flex; flex-direction: column; overflow: hidden; }
.wall { position: absolute; left: 0; top: 0; width: 720px; height: 1339px; }
.doodles, .doodles * { fill: none; stroke: #262b2f; stroke-width: 1.600; vector-effect: non-scaling-stroke; }
.messages { position: relative; flex: 1; display: flex; flex-direction: column; }

.ghost-a { align-self: flex-end; width: 274px; height: 7px; margin-right: 40px; background: #1f272a; border-radius: 0 0 14px 14px; }
.ghost-b { align-self: flex-end; width: 125px; height: 69px; margin-top: 6px; margin-right: 35px; background: #1f272a; border-radius: 18px 18px 0 0; }

.selected { height: 169px; background: rgba(255, 255, 255, .3); display: flex; justify-content: flex-end; align-items: flex-start; padding-right: 35px; }
.sel-bubble { width: 317px; height: 159px; background: #5f6467; border-radius: 0 0 20px 20px; padding: 24px 20px 0 17px; display: flex; flex-direction: column; direction: rtl; align-items: flex-start; }
.sel-line { margin: 0; color: #f4f5f5; font-size: 27px; line-height: 36px; white-space: nowrap; }
.sel-line + .sel-line { margin-top: 0; }
.sel-foot { width: 100%; display: flex; justify-content: space-between; align-items: flex-end; direction: rtl; margin-top: 12px; }
.phone { font-family: "Roboto", sans-serif; font-weight: 700; font-size: 33px; line-height: 30px; letter-spacing: .800px; color: #7cc4ea; border-bottom: 2px solid #7cc4ea; direction: ltr; }
.sel-foot .time { color: #c2c5c7; margin-bottom: -9px; }

.bubble { position: relative; display: flex; justify-content: space-between; height: 68px; direction: rtl; border-radius: 22px; padding-right: 20px; color: #f4f5f5; }
.out { align-self: flex-start; margin-left: 34px; background: #154d38; padding-left: 18px; }
.in { align-self: flex-end; margin-right: 35px; background: #20272a; padding-left: 16px; }
.txt { font-size: 28.500px; line-height: 36px; margin-top: 12px; white-space: nowrap; }
.meta { display: flex; align-items: center; gap: 10px; align-self: flex-end; height: 32px; margin-bottom: 6px; }
.time { font-size: 18px; line-height: 1; white-space: nowrap; direction: rtl; }
.out .time { color: #a6bbb1; }
.in .time { color: #9ea2a4; }
.ticks { width: 32px; height: 20px; margin-bottom: 3px; }

.tail::before { content: ""; position: absolute; top: 0; width: 34px; height: 26px; background: inherit; }
.out.tail { border-top-left-radius: 0; }
.in.tail { border-top-right-radius: 0; }
.out.tail::before { left: -13px; clip-path: polygon(0 0, 100% 0, 100% 100%, 13px 100%); }
.in.tail::before { right: -15px; clip-path: polygon(0 0, 100% 0, 15px 100%, 0 100%); }

.gap-first { margin-top: 10px; }
.gap-lg { margin-top: 20px; }
.gap-sm { margin-top: 4px; }
.w188 { width: 188px; }
.w254 { width: 254px; }
.w268 { width: 268px; }
.w276 { width: 276px; }
.w316 { width: 316px; }
.w318 { width: 318px; }
.w322 { width: 322px; }
.w332 { width: 332px; }
.w407 { width: 407px; }
.w422 { width: 422px; }

.quoted { height: 168px; flex-direction: column; justify-content: flex-start; padding: 9px 8px 0 16px; border-radius: 22px; }
.quote { height: 92px; border-right: 8px solid #a28bf0; border-radius: 8px; padding: 10px 17px 0 0; background: #20272a; }
.quote-name { font-family: "Inter", sans-serif; font-weight: 600; font-size: 27px; line-height: 34px; color: #c9bdf7; direction: ltr; text-align: right; }
.quote-text { font-size: 24.500px; line-height: 32px; margin-top: 3px; color: #888c8f; white-space: nowrap; }
.quoted-foot { display: flex; justify-content: space-between; flex: 1; padding-right: 12px; }
.q-mark { margin-top: 14px; }
.quoted .meta { margin-bottom: 6px; margin-left: 0; }

.reaction-pill { position: absolute; left: 18px; top: 60px; width: 58px; height: 51px; border-radius: 50%; background: #20272a; display: flex; align-items: center; justify-content: center; }
.pill-emoji { width: 38px; height: 38px; }

/* reactions */
.reactions { position: absolute; left: 28px; top: 18px; width: 665px; height: 112px; border-radius: 56px; background: #1f272b; display: flex; align-items: center; padding: 0 29px 0 23px; }
.plus { width: 66px; height: 66px; border-radius: 50%; background: #6f7478; display: flex; align-items: center; justify-content: center; flex: none; position: relative; z-index: 1; }
.plus-ic { width: 32px; height: 32px; }
.emoji-row { display: flex; gap: 29px; margin-left: -12px; margin-top: 6px; }
.emoji { width: 55px; height: 55px; flex: none; display: block; }

/* composer */
.composer { position: relative; flex: none; display: flex; gap: 11px; padding: 0 11px 9px 9px; }
.mic { width: 96px; height: 96px; border-radius: 50%; background: #fcfcfc; display: flex; align-items: center; justify-content: center; flex: none; }
.mic-ic { width: 28px; height: 38px; }
.input { flex: 1; height: 95px; margin-top: 1px; border-radius: 48px; background: #20282b; display: flex; align-items: center; padding: 0 26px 0 25px; }
.ic-camera { width: 40px; height: 36px; }
.ic-clip { width: 26px; height: 40px; margin-left: 62px; }
.placeholder { margin-left: auto; color: #8f9699; font-size: 27px; direction: rtl; line-height: 1; margin-right: -2px; }
.cursor { width: 3px; height: 49px; background: #fff; margin-left: 1px; position: relative; }
.ic-sticker { width: 40px; height: 40px; margin-left: 28px; }

/* nav */
.navbar { height: 96px; background: #000; flex: none; display: flex; align-items: center; padding-left: 180px; }
.nav-back { width: 24px; height: 27px; }
.nav-home { width: 36px; height: 36px; margin-left: 138px; }
.nav-square { width: 24px; height: 23px; background: #6e6e6e; margin-left: 136px; }
```
